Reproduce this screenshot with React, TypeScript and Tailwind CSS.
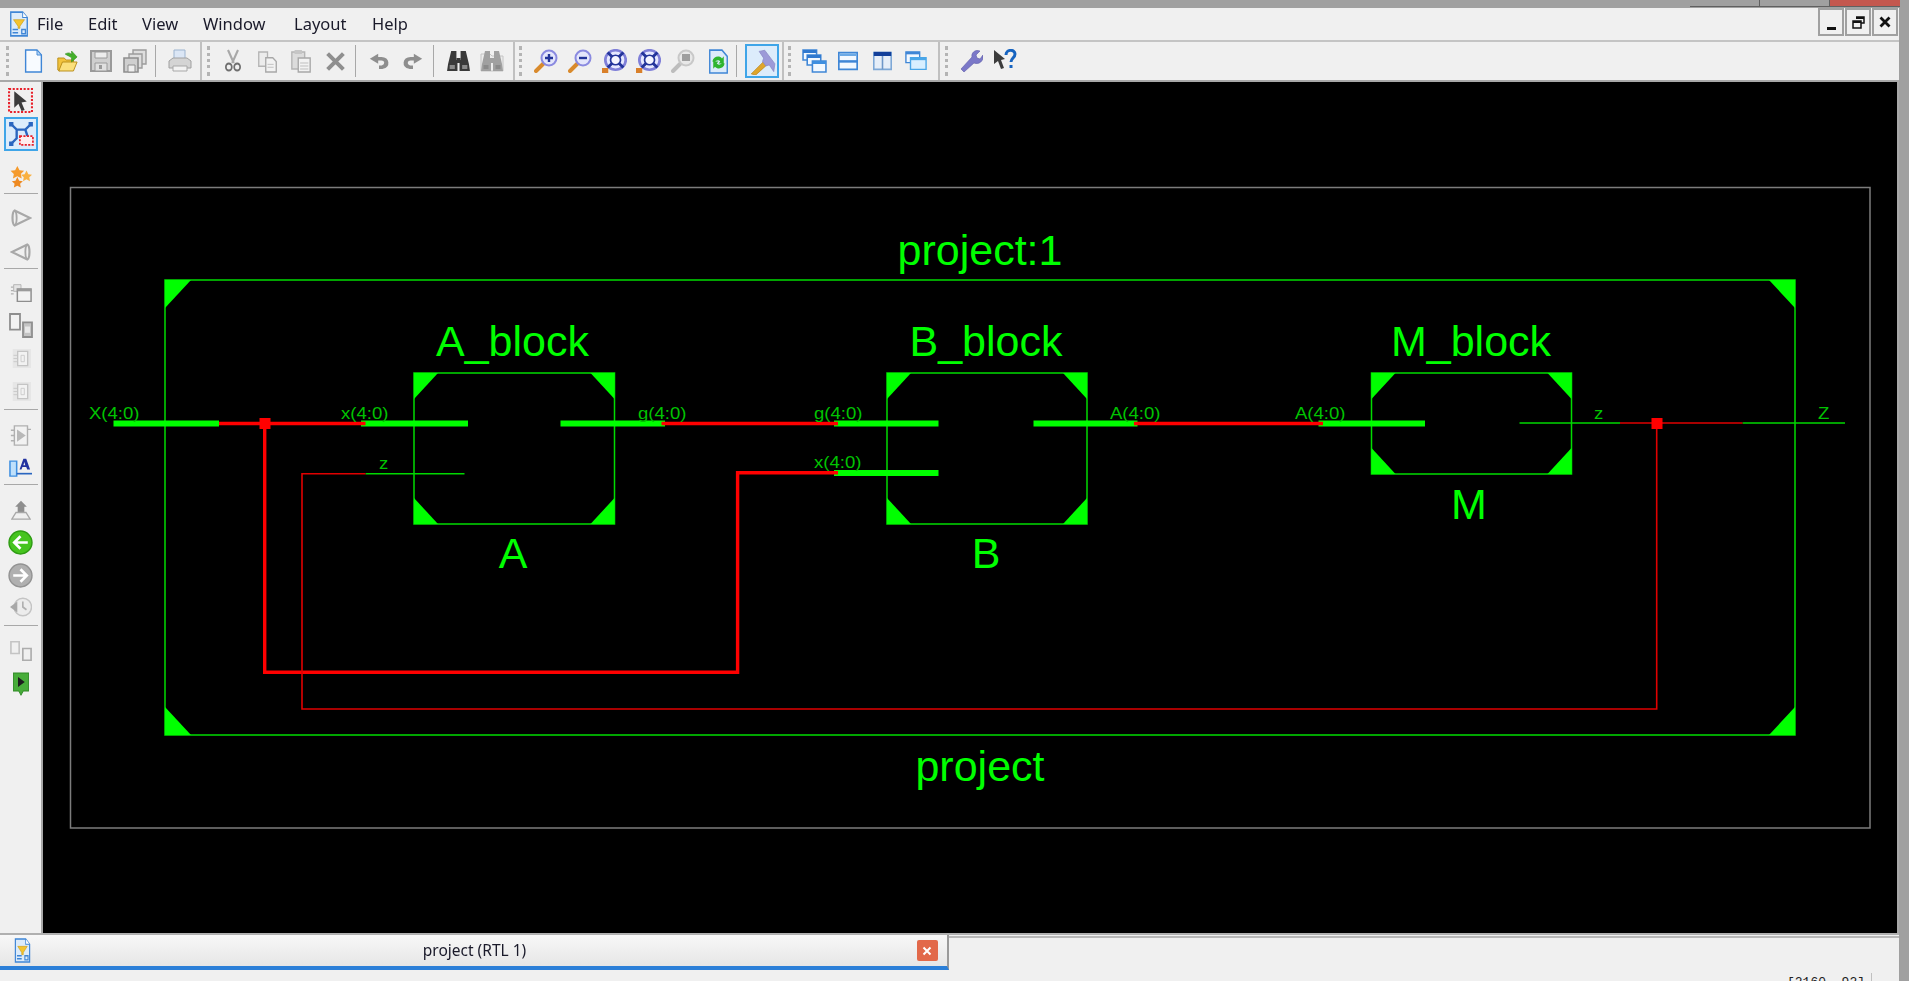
import type { ReactNode } from 'react';

function Ico({ w = 24, h = 24, children }: { w?: number; h?: number; children: ReactNode }) {
  return (
    <svg width={w} height={h} viewBox="0 0 24 24" preserveAspectRatio="none" className="blur-[0.4px]">
      {children}
    </svg>
  );
}

function Btn({ children }: { children: ReactNode }) {
  return <div className="flex w-[34px] h-full items-center justify-center">{children}</div>;
}

function Grip() {
  return <div className="h-[30px] w-[4px] border-l-[3px] border-dotted border-[#b4b4b4]" />;
}

function Sep({ className }: { className: string }) {
  return <div className={`h-[32px] w-[1px] bg-[#a8a8a8] ${className}`} />;
}

function HSep({ className }: { className: string }) {
  return <div className={`mx-[4px] h-[1px] w-[34px] shrink-0 bg-[#a8a8a8] ${className}`} />;
}

function ProjectIcon({ w = 22, h = 26 }: { w?: number; h?: number }) {
  return (
    <Ico w={w} h={h}>
      <path d="M3 1h13l5 5v17H3z" fill="#dcebfa" stroke="#3f86d6" strokeWidth="1.5" />
      <path d="M16 1v5h5" fill="#fff" stroke="#3f86d6" />
      <path d="M6 8h12l-5 6v2h-2v-2z" fill="#f4c430" stroke="#c89a10" strokeWidth="0.6" />
      <path d="M5 17h6M5 20h6M15 17h4v4h-4z" stroke="#3f86d6" strokeWidth="1.4" fill="none" />
    </Ico>
  );
}

function NewDoc() {
  return (
    <Ico w={21} h={24}>
      <path d="M3 1h13l5 5v17H3z" fill="#f8fbff" stroke="#3f86d6" strokeWidth="1.6" />
      <path d="M16 1v5h5z" fill="#bcd8f5" stroke="#3f86d6" />
    </Ico>
  );
}

function OpenFolder() {
  return (
    <Ico w={22} h={24}>
      <path d="M2 21V9h7l2 2h8v3H8l-4 8z" fill="#f2c33c" stroke="#b98d1a" />
      <path d="M3 22l4-9h16l-4 9z" fill="#fbe07c" stroke="#b98d1a" />
      <path d="M10 5c4-2 6-1 7 1V2l6 6-6 5V9c-2-2-4-2-7-4z" fill="#43b02a" stroke="#2d8a1a" strokeWidth="0.6" />
    </Ico>
  );
}

function Floppy({ c = '#9a9a9a' }: { c?: string }) {
  return (
    <>
      <path d="M2 2h20v20H2z" fill="#cfcfcf" stroke={c} strokeWidth="2" />
      <path d="M6 3h12v6H6z" fill="#ededed" stroke={c} />
      <path d="M6 14h12v8H6z" fill="#e0e0e0" stroke={c} />
      <path d="M10 16h3v4h-3z" fill={c} />
    </>
  );
}

function SaveAll() {
  return (
    <Ico>
      <path d="M10 1h13v14H10z" fill="#dedede" stroke="#9c9c9c" strokeWidth="1.4" />
      <path d="M6 5h13v14H6z" fill="#dedede" stroke="#9c9c9c" strokeWidth="1.4" />
      <path d="M1 9h14v14H1z" fill="#cfcfcf" stroke="#8e8e8e" strokeWidth="1.6" />
      <path d="M5 16h7v7H5z" fill="#eee" stroke="#8e8e8e" />
    </Ico>
  );
}

function Printer() {
  return (
    <Ico>
      <path d="M6 1h11v10H6z" fill="#dbe6f5" stroke="#9db4d0" />
      <path d="M1 12l4-3h14l4 3v7H1z" fill="#d4d4d4" stroke="#a0a0a0" />
      <path d="M5 17h14v5H5z" fill="#f2f2f2" stroke="#a8a8a8" />
    </Ico>
  );
}

function Scissors() {
  return (
    <Ico w={20} h={24}>
      <path d="M6 1l7 13M18 1l-7 13" stroke="#a8a8a8" strokeWidth="2.6" fill="none" />
      <circle cx="7" cy="18" r="3.6" fill="none" stroke="#6f6f6f" strokeWidth="2" />
      <circle cx="17" cy="18" r="3.6" fill="none" stroke="#6f6f6f" strokeWidth="2" />
    </Ico>
  );
}

function Copy() {
  return (
    <Ico w={21} h={23}>
      <path d="M2 2h10v15H2z" fill="#ececec" stroke="#b4b4b4" strokeWidth="1.5" />
      <path d="M10 8h8l4 4v11H10z" fill="#f2f2f2" stroke="#a8a8a8" strokeWidth="1.5" />
      <path d="M12 15h7M12 18h7" stroke="#bdbdbd" />
    </Ico>
  );
}

function Paste() {
  return (
    <Ico w={22} h={24}>
      <path d="M2 3h14v17H2z" fill="#dcdcdc" stroke="#b4b4b4" strokeWidth="1.5" />
      <path d="M5 1h8v4H5z" fill="#c6c6c6" />
      <path d="M9 9h13v14H9z" fill="#f2f2f2" stroke="#a8a8a8" strokeWidth="1.5" />
      <path d="M11 14h9M11 17h9M11 20h9" stroke="#bdbdbd" />
    </Ico>
  );
}

function CrossIcon() {
  return (
    <Ico w={21} h={21}>
      <path d="M3 3l18 18M21 3L3 21" stroke="#8f8f8f" strokeWidth="4.6" fill="none" />
    </Ico>
  );
}

function Undo({ flip = false }: { flip?: boolean }) {
  return (
    <Ico w={20} h={17}>
      <g transform={flip ? 'translate(24 0) scale(-1 1)' : undefined}>
        <path d="M8 8h7c7 0 8 10 1 12h-4" fill="none" stroke="#8e8e8e" strokeWidth="5" />
        <path d="M1 8l10-7v14z" fill="#8e8e8e" />
      </g>
    </Ico>
  );
}

function Binoculars({ c = '#3a3a3a', bg = '' }: { c?: string; bg?: string }) {
  return (
    <>
      {bg && <path d="M1 5h9l2 2h11v15H1z" fill={bg} stroke="#c4c4c4" />}
      <path d="M5 2h5v9h1v11H1l1-7z" fill={c} />
      <path d="M19 2h-5v9h-1v11h10l-1-7z" fill={c} />
      <path d="M10 9h4v5h-4z" fill={c} />
      <path d="M3.500 16h5v4h-5zM15.500 16h5v4h-5z" fill="#8a8a8a" />
    </>
  );
}

function Magnifier({ ring = '#8a8ae0', children }: { ring?: string; children?: ReactNode }) {
  return (
    <Ico>
      <path d="M10 14L2 22" stroke="#d98a2c" strokeWidth="4" strokeLinecap="round" />
      <circle cx="15" cy="9" r="7.5" fill="#e4e6fb" stroke={ring} strokeWidth="2" />
      {children}
    </Ico>
  );
}

function Fit() {
  return (
    <Ico w={25} h={24}>
      <circle cx="13" cy="11" r="9.8" fill="#e6e8ff" stroke="#7f7fd8" strokeWidth="2.6" />
      <path d="M5.500 3.500l15 15M20.500 3.500l-15 15" stroke="#23349a" strokeWidth="2.800" />
      <circle cx="13" cy="11" r="4.800" fill="#f6f6ff" stroke="#23349a" strokeWidth="1.6" />
      <path d="M0 19h6v5H0z" fill="#d9802a" />
    </Ico>
  );
}

function RefreshDoc() {
  return (
    <Ico w={21} h={25}>
      <path d="M2 1h14l6 6v16H2z" fill="#dcebfa" stroke="#3f86d6" strokeWidth="1.6" />
      <path d="M5 12c1-5 8-6 11-3l2-2v7h-6l2-2c-2-2-5-1-6 1z" fill="#2eb52e" />
      <path d="M19 14c-1 5-8 6-11 3l-2 2v-7h6l-2 2c2 2 5 1 6-1z" fill="#2eb52e" />
    </Ico>
  );
}

function Hammer() {
  return (
    <Ico w={27} h={27}>
      <path d="M2 23L14 11l3 3L6 24z" fill="#e0a52a" stroke="#b57f12" strokeWidth="0.6" />
      <path d="M9 3l5-1 9 12-1 7-4-6-3 1-3-4 1-3z" fill="#9c9ad8" stroke="#8684c2" strokeWidth="0.6" />
    </Ico>
  );
}

function Cascade() {
  return (
    <Ico w={25} h={24}>
      <path d="M1 1h13v10H1z" fill="#f2f8ff" stroke="#3f86d6" strokeWidth="1.5" />
      <path d="M1 1h13v3H1z" fill="#2f78cf" />
      <path d="M5 6h13v10H5z" fill="#f2f8ff" stroke="#3f86d6" strokeWidth="1.5" />
      <path d="M5 6h13v3H5z" fill="#2f78cf" />
      <path d="M10 12h13v11H10z" fill="#f2f8ff" stroke="#3f86d6" strokeWidth="1.5" />
      <path d="M10 12h13v3H10z" fill="#3f8fe0" />
    </Ico>
  );
}

function TileH() {
  return (
    <Ico w={20} h={20}>
      <path d="M1 2h22v20H1z" fill="#f2f8ff" stroke="#3f86d6" strokeWidth="2" />
      <path d="M1 11h22v3H1z" fill="#3f86d6" />
      <path d="M2 3h20v3H2z" fill="#6aa9e6" />
    </Ico>
  );
}

function TileV() {
  return (
    <Ico w={19} h={20}>
      <path d="M1 2h22v20H1z" fill="#e6eef8" stroke="#7ea8d6" strokeWidth="2" />
      <path d="M1 1h22v5H1z" fill="#123f9a" />
      <path d="M11 6h2v16h-2z" fill="#6f97c8" />
    </Ico>
  );
}

function Windows() {
  return (
    <Ico w={22} h={20}>
      <path d="M1 1h15v13H1z" fill="#f2f8ff" stroke="#3f86d6" strokeWidth="1.5" />
      <path d="M1 1h15v3H1z" fill="#3f86d6" />
      <path d="M6 8h17v14H6z" fill="#d8efff" stroke="#4aa6e8" strokeWidth="1.5" />
      <path d="M6 8h17v3H6z" fill="#4aa6e8" />
    </Ico>
  );
}

function Wrench() {
  return (
    <Ico>
      <path d="M2 20L13 8c-1-4 3-8 8-6l-4 4 1 3 3 1 3-4c1 6-4 10-9 8L5 23z" fill="#7b78c8" stroke="#5c5aa8" strokeWidth="0.6" />
    </Ico>
  );
}

function HelpCursor() {
  return (
    <Ico>
      <path d="M1 1l11 9-4 1 3 8-3 1-3-8-4 3z" fill="#3c3c3c" />
      <path d="M13 6c0-6 9-6 9-1 0 4-4 4-4 8M18 16v3" fill="none" stroke="#1764c0" strokeWidth="3" />
    </Ico>
  );
}

function SelectTool() {
  return (
    <Ico w={25} h={25}>
      <path d="M1 1h22v22H1z" fill="none" stroke="#e8202a" strokeWidth="2" strokeDasharray="2 1.5" />
      <path d="M6 3l12 10-5 1 3 7-3 1-3-7-4 4z" fill="#3c3c3c" />
    </Ico>
  );
}

function RouteTool() {
  return (
    <Ico w={26} h={26}>
      <path d="M3 3l5 5h8l5-5M8 8v8l-5 5M16 8l2 6" fill="none" stroke="#2a66c0" strokeWidth="2.2" />
      <path d="M1 1h4v4H1zM19 1h4v4h-4zM1 19h4v4H1z" fill="#2a66c0" />
      <path d="M11 14h12v8H11z" fill="#fdeeee" stroke="#e8202a" strokeWidth="1.6" strokeDasharray="2 1.2" />
    </Ico>
  );
}

function Stars() {
  return (
    <Ico w={22} h={22}>
      <path d="M8 0l2.400 4.500 5 .6-3.600 3.500 1 5-4.800-2.500-4.800 2.500 1-5L.6 5.100l5-.6z" fill="#f59a2c" />
      <path d="M18 5l2 4 4 .5-3 2.800.8 4.200-3.800-2-3.800 2 .8-4.200-3-2.800 4-.5z" fill="#f9b040" />
      <path d="M8 12l2 4 4 .5-3 2.800.8 4.200-3.800-2-3.800 2 .8-4.200-3-2.800 4-.5z" fill="#ee8a22" />
    </Ico>
  );
}

function Triangle({ flip = false }: { flip?: boolean }) {
  return (
    <Ico w={22} h={20}>
      <g transform={flip ? 'translate(24 0) scale(-1 1)' : undefined}>
        <path d="M5 3l17 9-17 9c-3-2-3-16 0-18z" fill="#f0f0f0" stroke="#a8a8a8" strokeWidth="2.4" />
        <path d="M5 3c3 2 3 16 0 18" fill="none" stroke="#a8a8a8" strokeWidth="2" />
      </g>
    </Ico>
  );
}

function Hier() {
  return (
    <Ico w={22} h={20}>
      <path d="M1 5h3M1 9h3M1 13h3" stroke="#b0b0b0" strokeWidth="1.5" />
      <path d="M4 2h8v8H4z" fill="#e4e4e4" stroke="#b0b0b0" />
      <path d="M8 7h15v15H8z" fill="#f2f2f2" stroke="#8e8e8e" strokeWidth="1.6" />
      <path d="M8 7h15v3H8z" fill="#9a9a9a" />
    </Ico>
  );
}

function TwoBoxes() {
  return (
    <Ico w={24} h={25}>
      <path d="M1 1h10v15H1z" fill="#f2f2f2" stroke="#8e8e8e" strokeWidth="1.8" />
      <path d="M14 9h9v14h-9z" fill="#c4c4c4" stroke="#8e8e8e" strokeWidth="1.8" />
      <path d="M16 13h5v6h-5z" fill="#e8e8e8" />
    </Ico>
  );
}

function Chip() {
  return (
    <Ico w={20} h={19}>
      <path d="M2 0h22v24H2z" fill="#e6e6e6" />
      <path d="M8 3h12v18H8z" fill="#f2f2f2" stroke="#c4c4c4" strokeWidth="1.6" />
      <path d="M12 8h4v8h-4z" fill="none" stroke="#c8c8c8" />
      <path d="M3 8h5M3 12h5M3 16h5" stroke="#c4c4c4" />
    </Ico>
  );
}

function ChipPlay() {
  return (
    <Ico w={21} h={21}>
      <path d="M1 6h5M1 12h5M1 18h5M20 5h4" stroke="#b0b0b0" strokeWidth="1.5" />
      <path d="M5 1h15v22H5z" fill="#f2f2f2" stroke="#b0b0b0" strokeWidth="1.6" />
      <path d="M8 5l10 7-10 7z" fill="#b8b8b8" />
    </Ico>
  );
}

function LabelA() {
  return (
    <Ico w={23} h={20}>
      <path d="M1 5h7v18H1z" fill="#bfe0fb" stroke="#3f8fe0" strokeWidth="1.6" />
      <path d="M11 15L15 2h3l4 13h-3l-1-3h-4l-1 3zM15 10h2l-1-4z" fill="#2332a0" />
      <path d="M8 20h16" stroke="#2a66c0" strokeWidth="2" />
    </Ico>
  );
}

function UpArrow() {
  return (
    <Ico w={20} h={20}>
      <path d="M12 1l7 7h-3v7H8V8H5z" fill="#8e8e8e" />
      <path d="M6 15h12l5 8H1z" fill="#f0f0f0" stroke="#a8a8a8" strokeWidth="1.6" />
    </Ico>
  );
}

function RoundArrow({ fill, stroke, flip = false }: { fill: string; stroke: string; flip?: boolean }) {
  return (
    <Ico w={25} h={25}>
      <circle cx="12" cy="12" r="11" fill={fill} stroke={stroke} strokeWidth="1.4" />
      <g transform={flip ? 'translate(24 0) scale(-1 1)' : undefined}>
        <path d="M6 12h13M12 6l-6 6 6 6" fill="none" stroke="#fff" strokeWidth="2.6" />
      </g>
    </Ico>
  );
}

function History() {
  return (
    <Ico w={22} h={22}>
      <circle cx="14" cy="12" r="9.500" fill="#ececec" stroke="#c4c4c4" strokeWidth="1.6" />
      <path d="M0 12l8-6v12z" fill="#a8a8a8" />
      <path d="M14 6v6l4 3" fill="none" stroke="#b0b0b0" strokeWidth="1.8" />
    </Ico>
  );
}

function GroupBoxes() {
  return (
    <Ico w={22} h={20}>
      <path d="M1 1h9v14H1z" fill="#f0f0f0" stroke="#c4c4c4" strokeWidth="1.8" />
      <path d="M14 9h9v14h-9z" fill="#f0f0f0" stroke="#adadad" strokeWidth="1.8" />
    </Ico>
  );
}

function PlayMarker() {
  return (
    <Ico w={18} h={24}>
      <path d="M2 1h20v18h-7l-3 4-3-4H2z" fill="#48ad3a" stroke="#2f8a25" strokeWidth="1.2" />
      <path d="M8 5l9 5-9 5z" fill="#1e1e1e" />
    </Ico>
  );
}

function Block({ x, y, x2, y2, c }: { x: number; y: number; x2: number; y2: number; c: number }) {
  const cy = c + 2;
  return (
    <g>
      <rect x={x} y={y} width={x2 - x} height={y2 - y} fill="none" stroke="#00dc00" strokeWidth="1.5" />
      <polygon fill="#00ff00" points={`${x},${y} ${x + c},${y} ${x},${y + cy}`} />
      <polygon fill="#00ff00" points={`${x2},${y} ${x2 - c},${y} ${x2},${y + cy}`} />
      <polygon fill="#00ff00" points={`${x},${y2} ${x + c},${y2} ${x},${y2 - cy}`} />
      <polygon fill="#00ff00" points={`${x2},${y2} ${x2 - c},${y2} ${x2},${y2 - cy}`} />
    </g>
  );
}

// pin labels in the reference are wider than they are tall
function Pin({ x, y, text }: { x: number; y: number; text: string }) {
  return (
    <text transform={`translate(${x} ${y}) scale(1.16 1)`} fontSize="16" fill="#00c400">
      {text}
    </text>
  );
}

function Title({ x, y, text }: { x: number; y: number; text: string }) {
  return (
    <text x={x} y={y} fontSize="43" fill="#00ff00" textAnchor="middle">
      {text}
    </text>
  );
}

function Schematic() {
  return (
    <svg
      viewBox="43 82 1854 851"
      width="1854"
      height="851"
      className="block font-['Liberation_Sans',Arial,sans-serif]"
    >
      <rect x="70.500" y="187.500" width="1799.500" height="640.500" fill="none" stroke="#7c7c7c" strokeWidth="1.5" />

      <Block x={165} y={280} x2={1795} y2={735} c={26} />
      <Block x={414} y={373} x2={614.5} y2={524} c={24} />
      <Block x={887} y={373} x2={1087} y2={524} c={24} />
      <Block x={1371.5} y={373} x2={1571.5} y2={474} c={24} />

      {/* green port stubs */}
      <g fill="#00ff00">
        <rect x="113.500" y="420.500" width="105.500" height="6" />
        <rect x="361" y="420.500" width="107" height="6" />
        <rect x="560.500" y="420.500" width="104.500" height="6" />
        <rect x="834" y="420.500" width="104.500" height="6" />
        <rect x="834" y="470" width="104.500" height="6" />
        <rect x="1033.500" y="420.500" width="104" height="6" />
        <rect x="1318.500" y="420.500" width="106.500" height="6" />
      </g>
      <g stroke="#00d800" strokeWidth="1.6">
        <path d="M365.500 473.700H464.500" />
        <path d="M1519.500 423H1620" />
        <path d="M1742.500 423H1845" />
      </g>

      {/* nets */}
      <g fill="none" stroke="#ff0000" strokeWidth="3.4">
        <path d="M219 423.500H365.500" />
        <path d="M661.500 423.500H838" />
        <path d="M1134 423.500H1323" />
        <path d="M838 472.700H737.600V672.300H264.700V423.500" />
      </g>
      <g fill="none" stroke="#e00000" strokeWidth="1.6">
        <path d="M365.500 473.700H302V709H1656.700V423" />
        <path d="M1620 423H1742.500" />
      </g>
      <rect x="259.500" y="418" width="11" height="11" fill="#ff0000" />
      <rect x="1651.500" y="418" width="11" height="11" fill="#ff0000" />

      <Title x={980} y={265} text="project:1" />
      <Title x={980} y={781} text="project" />
      <Title x={512.500} y={356} text="A_block" />
      <Title x={986} y={356} text="B_block" />
      <Title x={1471} y={356} text="M_block" />
      <Title x={513} y={568} text="A" />
      <Title x={986} y={568} text="B" />
      <Title x={1469} y={519} text="M" />

      <Pin x={89} y={418.500} text="X(4:0)" />
      <Pin x={341} y={418.500} text="x(4:0)" />
      <Pin x={379} y={468.500} text="z" />
      <Pin x={638} y={418.500} text="g(4:0)" />
      <Pin x={814} y={418.500} text="g(4:0)" />
      <Pin x={814} y={468} text="x(4:0)" />
      <Pin x={1110} y={418.500} text="A(4:0)" />
      <Pin x={1295} y={418.500} text="A(4:0)" />
      <Pin x={1594} y={418.500} text="z" />
      <Pin x={1818} y={418.500} text="Z" />
    </svg>
  );
}

function Toolbar() {
  return (
    <div className="flex h-[40px] shrink-0 border-b-2 border-[#a8a8a8] bg-[#f0f0f0]">
      <div className="flex items-center border-r-2 border-[#c0c0c0] pl-[6px] pr-[3px]">
        <Grip />
        <div className="w-[6px]" />
        <Btn><NewDoc /></Btn>
        <Btn><OpenFolder /></Btn>
        <Btn><Ico><Floppy /></Ico></Btn>
        <Btn><SaveAll /></Btn>
        <Sep className="ml-[3px] mr-[7px]" />
        <Btn><Printer /></Btn>
      </div>
      <div className="flex items-center border-r-2 border-[#c0c0c0] pl-[5px] pr-[4px]">
        <Grip />
        <div className="w-[5px]" />
        <Btn><Scissors /></Btn>
        <Btn><Copy /></Btn>
        <Btn><Paste /></Btn>
        <Btn><CrossIcon /></Btn>
        <Sep className="ml-[3px] mr-[6px]" />
        <Btn><Undo /></Btn>
        <Btn><Undo flip /></Btn>
        <Sep className="ml-[3px] mr-[7px]" />
        <Btn><Ico w={25} h={24}><Binoculars /></Ico></Btn>
        <Btn><Ico><Binoculars c="#a0a0a0" bg="#ececec" /></Ico></Btn>
      </div>
      <div className="flex items-center border-r-2 border-[#c0c0c0] pl-[4px] pr-[3px]">
        <Grip />
        <div className="w-[6px]" />
        <Btn>
          <Magnifier>
            <path d="M15 5v8M11 9h8" stroke="#23349a" strokeWidth="2.4" />
          </Magnifier>
        </Btn>
        <Btn>
          <Magnifier>
            <path d="M11 9h8" stroke="#23349a" strokeWidth="2.4" />
          </Magnifier>
        </Btn>
        <Btn><Fit /></Btn>
        <Btn><Fit /></Btn>
        <div className="flex h-full w-[36px] items-center justify-center">
          <Ico>
            <path d="M10 14L2 22" stroke="#bdbdbd" strokeWidth="4" strokeLinecap="round" />
            <circle cx="15" cy="9" r="7.5" fill="#e8e8e8" stroke="#c8c8c8" strokeWidth="2" />
            <path d="M11 5h8v7h-8z" fill="#9e9e9e" />
          </Ico>
        </div>
        <Btn><RefreshDoc /></Btn>
        <Sep className="ml-[1px] mr-[8px]" />
        <div className="flex h-[34px] w-[34px] items-center justify-center border-2 border-[#3fa5e8] bg-[#dcecfb]">
          <Hammer />
        </div>
      </div>
      <div className="flex items-center border-r-2 border-[#c0c0c0] pl-[4px] pr-[5px]">
        <Grip />
        <div className="w-[5px]" />
        <Btn><Cascade /></Btn>
        <Btn><TileH /></Btn>
        <Btn><TileV /></Btn>
        <Btn><Windows /></Btn>
      </div>
      <div className="flex items-center pl-[5px]">
        <Grip />
        <div className="w-[5px]" />
        <Btn><Wrench /></Btn>
        <Btn><HelpCursor /></Btn>
      </div>
    </div>
  );
}

function SideTools() {
  return (
    <div className="flex w-[43px] shrink-0 flex-col border-r-2 border-[#a8a8a8] bg-[#f0f0f0] pt-[2px]">
      <div className="flex h-[33px] items-center justify-center"><SelectTool /></div>
      <div className="mx-[4px] flex h-[34px] w-[34px] items-center justify-center border-2 border-[#3fa5e8] bg-[#dcecfb]">
        <RouteTool />
      </div>
      <div className="mt-[9px] flex h-[33px] items-center justify-center"><Stars /></div>
      <HSep className="mt-0" />
      <div className="mt-[9px] flex h-[30px] items-center justify-center"><Triangle /></div>
      <div className="mt-[4px] flex h-[30px] items-center justify-center"><Triangle flip /></div>
      <HSep className="mt-[1px]" />
      <div className="mt-[9px] flex h-[30px] items-center justify-center"><Hier /></div>
      <div className="mt-[1px] flex h-[33px] items-center justify-center"><TwoBoxes /></div>
      <div className="flex h-[33px] items-center justify-center"><Chip /></div>
      <div className="flex h-[33px] items-center justify-center"><Chip /></div>
      <HSep className="mt-[1px]" />
      <div className="mt-[9px] flex h-[33px] items-center justify-center"><ChipPlay /></div>
      <div className="flex h-[30px] items-center justify-center"><LabelA /></div>
      <HSep className="mt-[2px]" />
      <div className="mt-[8px] flex h-[33px] items-center justify-center"><UpArrow /></div>
      <div className="flex h-[33px] items-center justify-center">
        <RoundArrow fill="#46c41e" stroke="#2f9c14" />
      </div>
      <div className="flex h-[33px] items-center justify-center">
        <RoundArrow fill="#b0b0b0" stroke="#939393" flip />
      </div>
      <div className="flex h-[30px] items-center justify-center"><History /></div>
      <HSep className="mt-[3px]" />
      <div className="mt-[8px] flex h-[33px] items-center justify-center"><GroupBoxes /></div>
      <div className="flex h-[33px] items-center justify-center"><PlayMarker /></div>
    </div>
  );
}

export default function App() {
  return (
    <div className="flex h-[981px] w-[1909px] flex-col overflow-hidden bg-[#a0a0a0] font-['Noto_Sans',sans-serif]">
      {/* desktop strip behind the window */}
      <div className="flex h-[8px] shrink-0">
        <div className="flex-1" />
        <div className="h-[7px] w-[69px] border-b border-[#606060]" />
        <div className="h-[7px] w-[70px] border-b border-l border-[#606060]" />
        <div className="h-[7px] w-[71px] border-b border-l border-[#606060] bg-[#c4574e]" />
        <div className="w-[9px]" />
      </div>

      <div className="flex min-h-0 flex-1">
        <div className="flex w-[1899px] flex-col bg-[#f0f0f0]">
          {/* menu bar */}
          <div className="flex h-[34px] shrink-0 items-center border-b-2 border-[#c4c4c4] text-[16.5px] text-[#1a1a2a]">
            <div className="flex w-[37px] justify-center pl-[1px]">
              <ProjectIcon />
            </div>
            <span className="w-[51px] blur-[0.3px]">File</span>
            <span className="w-[54px] blur-[0.3px]">Edit</span>
            <span className="w-[61px] blur-[0.3px]">View</span>
            <span className="w-[91px] blur-[0.3px]">Window</span>
            <span className="w-[78px] blur-[0.3px]">Layout</span>
            <span className="blur-[0.3px]">Help</span>
            <div className="ml-auto mb-[4px] flex gap-[1px] pr-[1px]">
              <div className="flex h-[28px] w-[26px] items-end justify-center border-2 border-[#a0a0a0] pb-[4px]">
                <div className="h-[3px] w-[9px] bg-[#111]" />
              </div>
              <div className="flex h-[28px] w-[26px] items-center justify-center border-2 border-[#a0a0a0]">
                <svg width="13" height="13" viewBox="0 0 13 13">
                  <path d="M4 1h8v6H9M1 5h8v7H1z" fill="none" stroke="#111" strokeWidth="1.5" />
                  <path d="M4 1h8v2H4zM1 5h8v2H1z" fill="#111" />
                </svg>
              </div>
              <div className="flex h-[28px] w-[26px] items-center justify-center border-2 border-[#a0a0a0]">
                <svg width="12" height="12" viewBox="0 0 12 12">
                  <path d="M1.500 1.500l9 9M10.500 1.500l-9 9" stroke="#111" strokeWidth="2.800" />
                </svg>
              </div>
            </div>
          </div>

          <Toolbar />

          <div className="flex h-[851px] shrink-0">
            <SideTools />
            <div className="w-[1856px] border-r-2 border-[#a8a8a8] bg-black">
              <Schematic />
            </div>
          </div>

          {/* tab row */}
          <div className="flex h-[37px] shrink-0 border-t-2 border-[#b0b0b0]">
            <div className="flex w-[949px] items-center justify-between border-r-2 border-b-[4px] border-[#9a9a9a] border-b-[#2b7fd8] bg-gradient-to-b from-[#f8f8f8] to-[#e6e6e6] pl-[13px] pr-[9px]">
              <ProjectIcon w={19} h={25} />
              <span className="text-[15.5px] text-[#1a1a2a] blur-[0.3px]">project (RTL 1)</span>
              <div className="flex h-[21px] w-[21px] items-center justify-center rounded-[2px] bg-[#e2694a]">
                <svg width="10" height="10" viewBox="0 0 10 10">
                  <path d="M1.500 1.500l7 7M8.500 1.500l-7 7" stroke="#fff" strokeWidth="2" />
                </svg>
              </div>
            </div>
            <div className="mt-[1px] flex-1 border-t-2 border-[#b8b8b8]" />
          </div>

          {/* status */}
          <div className="flex min-h-0 flex-1 justify-end overflow-hidden pr-[27px] pt-[3px]">
            <span className="font-['Liberation_Mono',monospace] text-[13px] leading-[20px] text-[#222]">
              [2160, 92]
            </span>
            <div className="ml-[6px] h-[20px] w-[1px] bg-[#c0c0c0]" />
          </div>
        </div>
        <div className="flex-1 bg-[#a0a0a0]" />
      </div>
    </div>
  );
}
